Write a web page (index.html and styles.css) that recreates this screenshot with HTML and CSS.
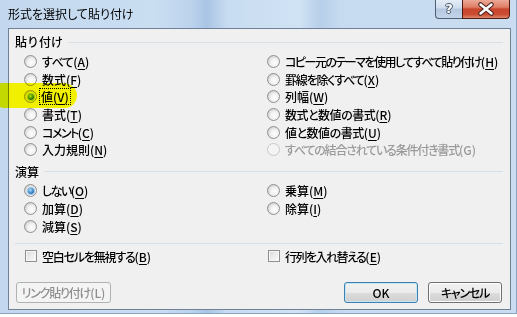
FILE: index.html
```html
<!DOCTYPE html>
<html lang="ja">
<head>
  <meta charset="UTF-8">
  <title>形式を選択して貼り付け</title>
  <link rel="stylesheet" href="styles.css">
</head>
<body>

<div class="win">
  <div class="titlebar">
    <span class="title">形式を選択して貼り付け</span>
    <div class="caption">
      <span class="cap-help">?</span>
      <span class="cap-close">
        <svg width="46" height="18" viewBox="0 0 46 18">
          <path d="M17.5 4.5 L28.5 13.5 M28.5 4.5 L17.5 13.5" stroke="#4a2520" stroke-width="4.6" stroke-linecap="round"/>
          <path d="M17.5 4.5 L28.5 13.5 M28.5 4.5 L17.5 13.5" stroke="#ffffff" stroke-width="2.4" stroke-linecap="round"/>
        </svg>
      </span>
    </div>
  </div>

  <div class="client">
    <div class="group-head"><span>貼り付け</span><span class="rule"></span></div>
    <div class="opts paste">
      <div class="col">
        <div class="opt"><span class="radio"></span><span><span class="kana-s">すべて</span>(<u>A</u>)</span></div>
        <div class="opt"><span class="radio"></span><span>数式(<u>F</u>)</span></div>
        <div class="opt"><span class="radio on"></span><span class="focus">値(<u>V</u>)</span></div>
        <div class="opt"><span class="radio"></span><span>書式(<u>T</u>)</span></div>
        <div class="opt"><span class="radio"></span><span><span class="kana-l">コメント</span>(<u>C</u>)</span></div>
        <div class="opt"><span class="radio"></span><span>入力規則(<u>N</u>)</span></div>
      </div>
      <div class="col">
        <div class="opt"><span class="radio"></span><span><span class="kana-l">コピー元のテーマを使用してすべて貼り付け</span>(<u>H</u>)</span></div>
        <div class="opt"><span class="radio"></span><span><span class="kana">罫線を除くすべて</span>(<u>X</u>)</span></div>
        <div class="opt"><span class="radio"></span><span>列幅(<u>W</u>)</span></div>
        <div class="opt"><span class="radio"></span><span><span class="kana-s">数式と数値の書式</span>(<u>R</u>)</span></div>
        <div class="opt"><span class="radio"></span><span><span class="kana-s">値と数値の書式</span>(<u>U</u>)</span></div>
        <div class="opt disabled"><span class="radio"></span><span><span class="kana">すべての結合されている条件付き書式</span>(G)</span></div>
      </div>
    </div>

    <div class="group-head second"><span>演算</span><span class="rule"></span></div>
    <div class="opts calc">
      <div class="col">
        <div class="opt"><span class="radio on"></span><span><span class="kana-l">しない</span>(<u>O</u>)</span></div>
        <div class="opt"><span class="radio"></span><span>加算(<u>D</u>)</span></div>
        <div class="opt"><span class="radio"></span><span>減算(<u>S</u>)</span></div>
      </div>
      <div class="col">
        <div class="opt"><span class="radio"></span><span>乗算(<u>M</u>)</span></div>
        <div class="opt"><span class="radio"></span><span>除算(<u>I</u>)</span></div>
      </div>
    </div>

    <div class="sep"></div>

    <div class="opts checks">
      <div class="opt"><span class="check"></span><span><span class="kana">空白セルを無視する</span>(<u>B</u>)</span></div>
      <div class="opt"><span class="check"></span><span><span class="kana-l">行列を入れ替える</span>(<u>E</u>)</span></div>
    </div>

    <div class="buttons">
      <button class="btn link" disabled><span class="kana">リンク貼り付け</span>(L)</button>
      <div class="btn-right">
        <button class="btn default">OK</button>
        <button class="btn cancel">キャンセル</button>
      </div>
    </div>
  </div>

  <!-- highlighter stroke over the selected option -->
  <div class="marker"></div>
</div>

</body>
</html>
```

FILE: styles.css
```css
body {
  margin: 0;
  background-color: #ffffff;
  font-family: "Noto Sans CJK JP", "Liberation Sans", sans-serif;
  font-size: 12px;
  font-weight: 500;
  color: #000;
}

.win {
  position: relative;
  width: 517px;
  height: 314px;
  display: flex;
  flex-direction: column;
  background: linear-gradient(90deg, #c3d8ee 0%, #cadef2 30%, #bcd3ec 37%, #a9c4e4 40%, #c8dcf1 44%, #d0e2f4 58%, #b7cfea 62%, #c7dbf0 66%, #c9dcf0 100%);
  box-shadow: inset -1px -1px 0 #8aa3bf;
}

.titlebar {
  height: 28px;
  display: flex;
  justify-content: space-between;
  padding-right: 7px;
}

.title {
  padding: 6px 0 0 8px;
  line-height: 16px;
  font-size: 12px;
  font-weight: 400;
  font-feature-settings: "palt";
}

.caption {
  display: flex;
  align-self: flex-start;
}

.cap-help {
  width: 26px;
  height: 18px;
  border: 1px solid #4e5f73;
  border-top: none;
  border-right: none;
  border-radius: 0 0 0 4px;
  background: linear-gradient(#e4edf7 0%, #cfdcec 45%, #b4c7df 50%, #c3d5ea 100%);
  color: #fff;
  font-family: "DejaVu Sans", sans-serif;
  font-weight: bold;
  font-size: 13px;
  line-height: 18px;
  text-align: center;
  text-shadow: 1px 0 0 #4a5868, -1px 0 0 #4a5868, 0 1px 0 #4a5868, 0 -1px 0 #4a5868;
}

.cap-close {
  width: 46px;
  height: 18px;
  border: 1px solid #4d1b13;
  border-top: none;
  border-radius: 0 0 4px 0;
  background: linear-gradient(#eba996 0%, #df7e66 40%, #c9462d 50%, #cb4c32 80%, #dd8a6e 100%);
}

.cap-close svg {
  display: block;
}

.client {
  margin: 0 6px 0 8px;
  height: 282px;
  box-sizing: border-box;
  border: 1px solid #6e8196;
  background-color: #f0f0f0;
  padding: 6px 7px 0 6px;
}

.group-head {
  display: flex;
  align-items: center;
  gap: 5px;
  height: 14px;
  line-height: 14px;
}

.group-head.second {
  margin-top: 6px;
}

.rule {
  flex: 1;
  height: 1px;
  background-color: #d5dfe5;
}

.opts {
  display: grid;
  grid-template-columns: 243px 1fr;
}

.paste {
  margin-top: 4px;
}

.calc {
  margin-top: 3px;
}

.col {
  display: flex;
  flex-direction: column;
}

.opt {
  display: flex;
  align-items: center;
  gap: 5px;
  height: 17.6px;
  padding-left: 9px;
  white-space: nowrap;
  font-feature-settings: "palt";
}

/* Meiryo UI kana run narrower than Noto's */
.kana-s {
  letter-spacing: -0.5px;
}

.kana {
  letter-spacing: -1.2px;
}

.kana-l {
  letter-spacing: -1.5px;
}

.calc .opt {
  height: 18px;
}

.opt u {
  text-decoration-thickness: 1px;
  text-underline-offset: 2px;
}

.opt.disabled {
  color: #9a9a9a;
}

.radio {
  position: relative;
  flex: none;
  width: 13px;
  height: 13px;
  box-sizing: border-box;
  border-radius: 50%;
  border: 1px solid #8f9090;
  background: radial-gradient(circle at 60% 60%, #fdfdfd 0%, #f2f2f2 40%, #d2d2d2 75%, #c2c2c2 100%);
}

.disabled .radio {
  border-color: #c9c9c9;
  background: #f4f4f4;
}

.radio.on::after {
  content: "";
  position: absolute;
  left: 2.5px;
  top: 2.5px;
  width: 6px;
  height: 6px;
  border-radius: 50%;
  background: radial-gradient(circle at 40% 35%, #bfe3fa 0%, #4a9ad8 40%, #1b5fa6 85%);
  box-shadow: 0 0 0 1px #9cc3e4;
}

.focus {
  outline: 1px dotted #000;
  padding: 0 1px;
  margin-left: -2px;
  line-height: 15px;
}

.sep {
  margin-top: 7px;
  height: 1px;
  background-color: #d5dfe5;
}

.checks {
  margin-top: 4px;
}

.checks .opt {
  height: 17px;
  padding-left: 10px;
}

.check {
  flex: none;
  width: 12px;
  height: 12px;
  box-sizing: border-box;
  border: 1px solid #8f8f8f;
  background: linear-gradient(135deg, #d8d8d8 0%, #ececec 50%, #fafafa 100%);
  box-shadow: inset 0 0 0 1px #f6f6f6;
}

.buttons {
  margin-top: 17px;
  display: flex;
  justify-content: space-between;
  padding: 0 1px;
}

.btn-right {
  display: flex;
  gap: 10px;
}

.btn {
  width: 74px;
  height: 21px;
  padding: 0;
  border: 1px solid #707070;
  border-radius: 3px;
  background: linear-gradient(#f2f2f2 0%, #ebebeb 50%, #dddddd 51%, #cfcfcf 100%);
  box-shadow: inset 0 0 0 1px #fcfcfc;
  font-family: "Noto Sans CJK JP", sans-serif;
  font-size: 12px;
  font-weight: 500;
  color: #000;
  font-feature-settings: "palt";
}

.btn.default {
  border-color: #3c7fb1;
  box-shadow: inset 0 0 0 1px #c4e5f6;
}

.btn.cancel {
  letter-spacing: -1.2px;
}

.btn.link {
  width: 95px;
  border-color: #adb2b5;
  background: #f4f4f4;
  box-shadow: none;
  color: #8f8f8f;
}

.marker {
  position: absolute;
  left: -6px;
  top: 83px;
  width: 83px;
  height: 25px;
  border-radius: 8px 14px 12px 10px / 12px 12px 13px 13px;
  background-color: #ffff00;
  mix-blend-mode: multiply;
  filter: blur(0.6px);
}
```
